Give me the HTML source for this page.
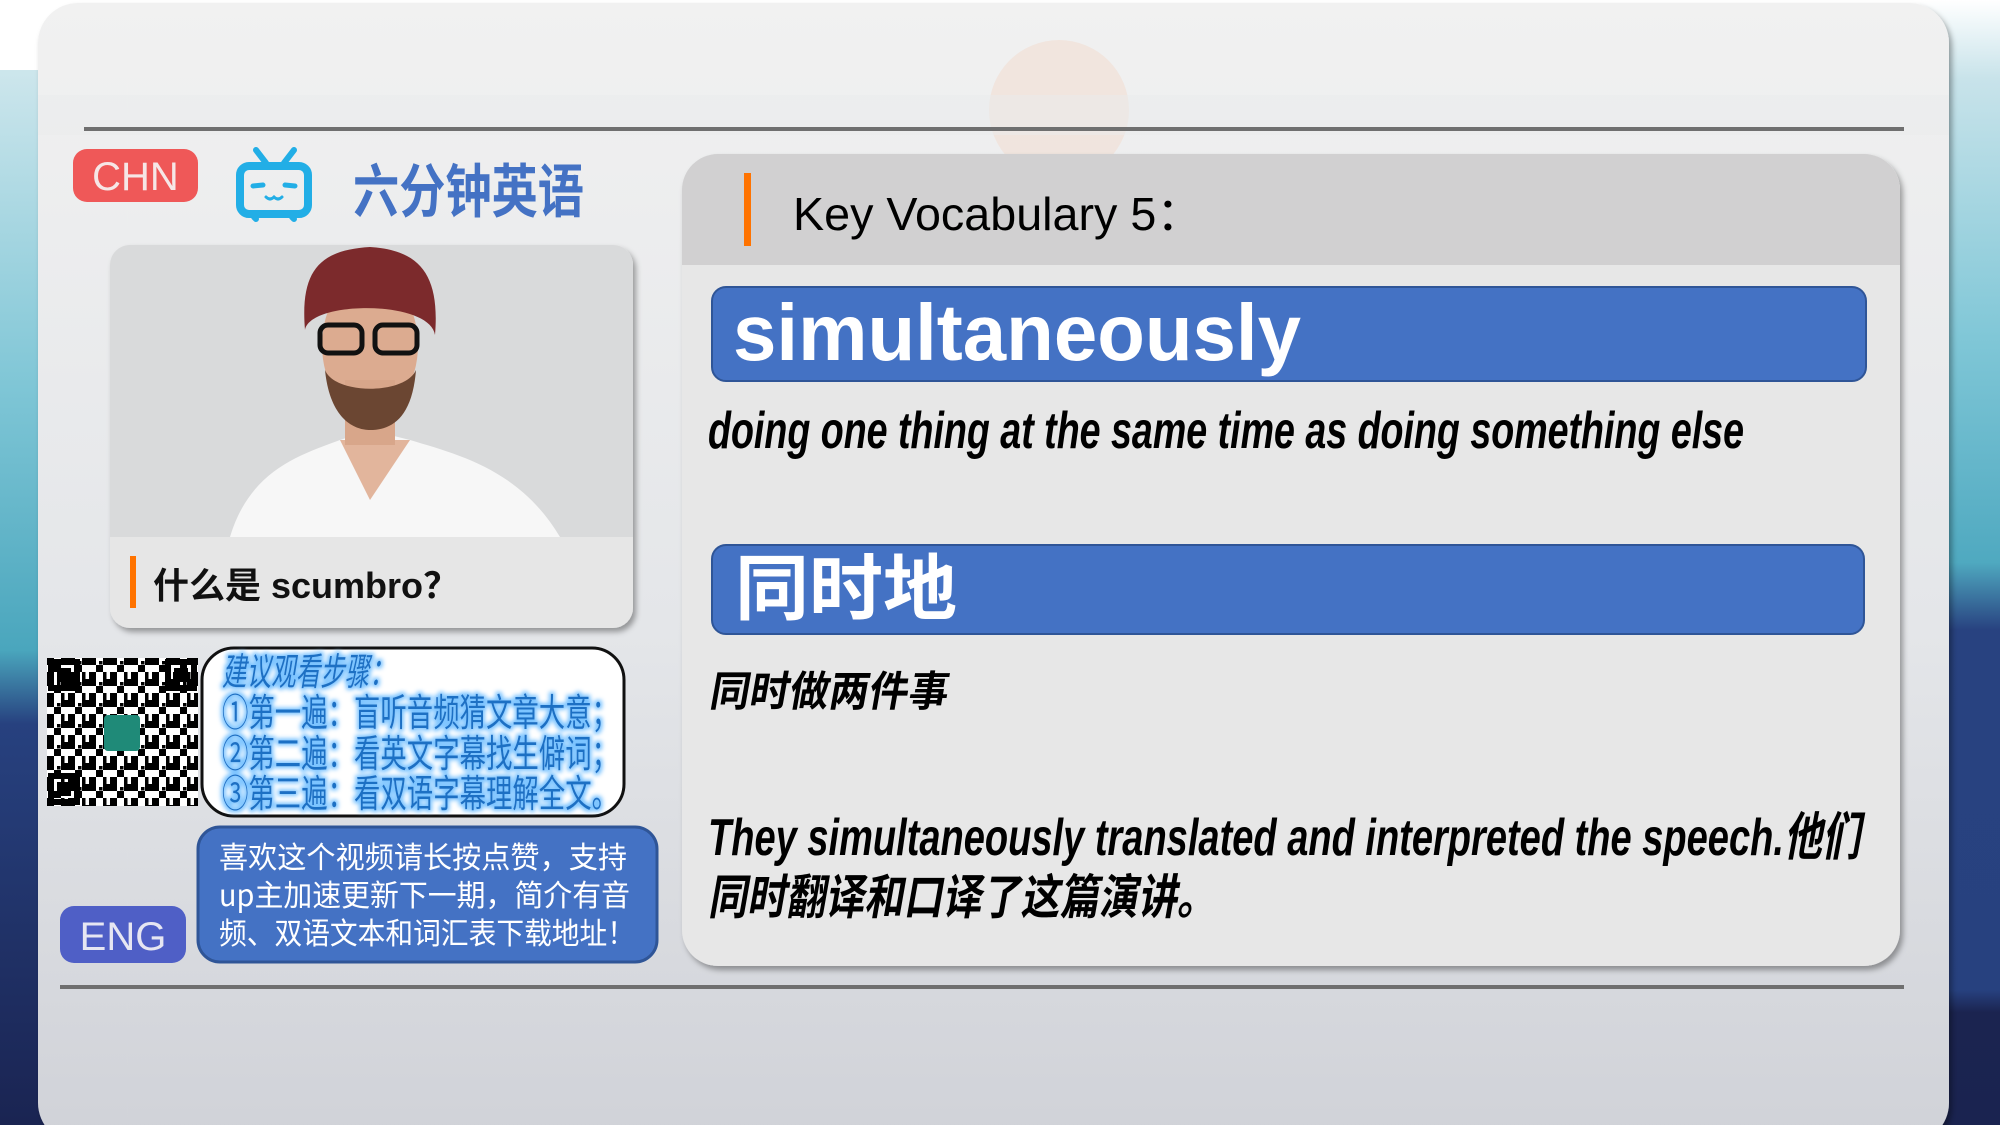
<!DOCTYPE html>
<html><head><meta charset="utf-8">
<style>
html,body{margin:0;padding:0;width:2000px;height:1125px;overflow:hidden;background:#fff}
svg{display:block}
text{font-family:"Liberation Sans","Noto Sans CJK SC",sans-serif}
.cjk{font-family:"Noto Sans CJK SC","WenQuanYi Zen Hei",sans-serif}
</style></head><body>
<svg width="2000" height="1125" viewBox="0 0 2000 1125" xmlns="http://www.w3.org/2000/svg">
<defs>
<linearGradient id="card" x1="0" y1="0" x2="0" y2="1">
<stop offset="0" stop-color="#f1f1f1"/><stop offset="0.55" stop-color="#e4e6e9"/><stop offset="1" stop-color="#d0d2d8"/>
</linearGradient>
<linearGradient id="leftbg" x1="0" y1="0" x2="0" y2="1">
<stop offset="0" stop-color="#cde6ec"/><stop offset="0.3" stop-color="#7fc6d6"/><stop offset="0.55" stop-color="#4aa6bd"/><stop offset="0.62" stop-color="#27417f"/><stop offset="1" stop-color="#1a2452"/>
</linearGradient>
<linearGradient id="rightbg" x1="0" y1="0" x2="0" y2="1">
<stop offset="0" stop-color="#fff"/><stop offset="0.07" stop-color="#c8e3ea"/><stop offset="0.3" stop-color="#80c7d7"/><stop offset="0.5" stop-color="#4fa9c0"/><stop offset="0.56" stop-color="#284280"/><stop offset="0.88" stop-color="#27417f"/><stop offset="0.9" stop-color="#1b2450"/><stop offset="1" stop-color="#1a2350"/>
</linearGradient>
<filter id="sh" x="-5%" y="-5%" width="110%" height="115%"><feDropShadow dx="3" dy="4" stdDeviation="3" flood-color="#000" flood-opacity="0.35"/></filter>
<filter id="glow" x="-5%" y="-20%" width="110%" height="140%"><feMorphology operator="dilate" radius="2" in="SourceAlpha" result="d"/><feGaussianBlur in="d" stdDeviation="2" result="b"/><feFlood flood-color="#7cc4ff"/><feComposite in2="b" operator="in" result="g"/><feMerge><feMergeNode in="g"/><feMergeNode in="SourceGraphic"/></feMerge></filter>
<pattern id="qr" x="47" y="658" width="21" height="21" patternUnits="userSpaceOnUse">
<rect width="21" height="21" fill="#fff"/>
<rect x="0" y="0" width="7" height="7" fill="#000"/><rect x="14" y="0" width="7" height="7" fill="#000"/>
<rect x="7" y="7" width="7" height="7" fill="#000"/><rect x="0" y="14" width="7" height="7" fill="#000"/>
<rect x="14" y="14" width="3.5" height="7" fill="#000"/><rect x="10" y="3" width="3.5" height="3.5" fill="#000"/>
</pattern>
</defs>
<rect width="2000" height="1125" fill="#fff"/>
<rect x="0" y="70" width="60" height="1055" fill="url(#leftbg)"/>
<rect x="1920" y="0" width="80" height="1125" fill="url(#rightbg)"/>
<rect x="38" y="3" width="1911" height="1140" rx="40" fill="url(#card)" filter="url(#sh)"/>
<circle cx="1059" cy="110" r="70" fill="#f2ddd2" opacity="0.6"/>
<rect x="38" y="95" width="1911" height="40" fill="#e9ebec" opacity="0.5"/>
<rect x="84" y="127" width="1820" height="4" fill="#6f6f6f"/>
<rect x="60" y="985" width="1844" height="4" fill="#6f6f6f"/>
<rect x="73" y="149" width="125" height="53" rx="14" fill="#ef5858"/>
<text x="135.5" y="190" font-size="40" fill="#f6e6e6" text-anchor="middle">CHN</text>
<g stroke="#22aee6" fill="none" stroke-linecap="round">
<rect x="240" y="166" width="68" height="48" rx="9" stroke-width="8"/>
<line x1="256" y1="150" x2="266" y2="163" stroke-width="6"/>
<line x1="294" y1="150" x2="284" y2="163" stroke-width="6"/>
<line x1="253" y1="186" x2="263" y2="185" stroke-width="5"/>
<line x1="285" y1="185" x2="295" y2="186" stroke-width="5"/>
<path d="M266 197 q4 4 8 0 q4 4 8 0" stroke-width="3"/>
<line x1="254" y1="217" x2="256" y2="219" stroke-width="6"/>
<line x1="292" y1="217" x2="294" y2="219" stroke-width="6"/>
</g>
<text class="cjk" x="353" y="212" font-size="58" font-weight="700" fill="#4472c4" textLength="231" lengthAdjust="spacingAndGlyphs">六分钟英语</text>
<g filter="url(#sh)">
<rect x="110" y="245" width="523" height="383" rx="20" fill="#e6e6e6"/>
</g>
<path d="M110 537 V265 a20 20 0 0 1 20 -20 H613 a20 20 0 0 1 20 20 V537 Z" fill="#d9dadb"/>
<path d="M230 537 C250 470 300 455 340 440 L370 430 L410 440 C460 455 520 470 560 537 Z" fill="#f7f7f7"/>
<path d="M340 440 L370 500 L410 440 Z" fill="#e2b59c"/>
<ellipse cx="370" cy="345" rx="48" ry="70" fill="#dcab90"/>
<rect x="345" y="380" width="50" height="65" fill="#d8a68a"/>
<path d="M325 370 C330 420 355 430 370 430 C390 430 412 420 416 370 C405 395 335 395 325 370Z" fill="#6b4632"/>
<path d="M305 330 C300 270 320 250 370 247 C420 250 440 275 435 335 C430 300 310 300 305 330Z" fill="#7c2a2c"/>
<rect x="320" y="325" width="42" height="28" rx="8" fill="none" stroke="#111" stroke-width="5"/>
<rect x="375" y="325" width="42" height="28" rx="8" fill="none" stroke="#111" stroke-width="5"/>
<rect x="130" y="556" width="6" height="52" fill="#ff7300"/>
<text x="153" y="598" font-size="36" font-weight="700" fill="#111"><tspan class="cjk">什么是</tspan> scumbro<tspan class="cjk">？</tspan></text>
<rect x="47" y="658" width="151" height="148" fill="url(#qr)"/>
<g fill="none" stroke="#000" stroke-width="6">
<rect x="51" y="662" width="26" height="26"/><rect x="168" y="662" width="26" height="26"/><rect x="51" y="776" width="26" height="26"/>
</g>
<rect x="57" y="668" width="14" height="14" fill="#000"/><rect x="174" y="668" width="14" height="14" fill="#000"/><rect x="57" y="782" width="14" height="14" fill="#000"/>
<rect x="104" y="715" width="36" height="36" rx="4" fill="#1f8a78"/>
<rect x="202" y="648" width="422" height="168" rx="32" fill="#fff" stroke="#111" stroke-width="3"/>
<g class="cjk" font-size="38" fill="#1d6fc4" filter="url(#glow)">
<text class="cjk" x="222" y="685" textLength="172" lengthAdjust="spacingAndGlyphs" font-style="italic">建议观看步骤：</text>
<text class="cjk" x="222" y="726" textLength="396" lengthAdjust="spacingAndGlyphs">①第一遍：盲听音频猜文章大意；</text>
<text class="cjk" x="222" y="767" textLength="396" lengthAdjust="spacingAndGlyphs">②第二遍：看英文字幕找生僻词；</text>
<text class="cjk" x="222" y="807" textLength="396" lengthAdjust="spacingAndGlyphs">③第三遍：看双语字幕理解全文。</text>
</g>
<rect x="198" y="827" width="459" height="135" rx="22" fill="#4472c4" stroke="#2f5597" stroke-width="3"/>
<g font-size="30" fill="#fff" class="cjk">
<text class="cjk" x="219" y="868" textLength="408" lengthAdjust="spacingAndGlyphs">喜欢这个视频请长按点赞，支持</text>
<text class="cjk" x="219" y="906" textLength="411" lengthAdjust="spacingAndGlyphs">up主加速更新下一期，简介有音</text>
<text class="cjk" x="219" y="944" textLength="416" lengthAdjust="spacingAndGlyphs">频、双语文本和词汇表下载地址！</text>
</g>
<rect x="60" y="906" width="126" height="57" rx="14" fill="#4f5fc6"/>
<text x="123" y="950" font-size="40" fill="#e6e6f2" text-anchor="middle">ENG</text>
<g filter="url(#sh)">
<rect x="682" y="154" width="1218" height="812" rx="36" fill="#e7e7e7"/>
</g>
<path d="M682 265 V190 a36 36 0 0 1 36 -36 H1864 a36 36 0 0 1 36 36 V265 Z" fill="#d1d0d1"/>
<rect x="744" y="173" width="7" height="73" fill="#ff7300"/>
<text x="793" y="230" font-size="46" fill="#000" textLength="410" lengthAdjust="spacingAndGlyphs">Key Vocabulary 5<tspan class="cjk">：</tspan></text>
<rect x="712" y="287" width="1154" height="94" rx="14" fill="#4472c4" stroke="#2f5597" stroke-width="2"/>
<text x="733" y="360" font-size="80" font-weight="700" fill="#fff" textLength="568" lengthAdjust="spacingAndGlyphs">simultaneously</text>
<text x="708" y="448" font-size="52" font-weight="700" font-style="italic" fill="#000" textLength="1036" lengthAdjust="spacingAndGlyphs">doing one thing at the same time as doing something else</text>
<rect x="712" y="545" width="1152" height="89" rx="14" fill="#4472c4" stroke="#2f5597" stroke-width="2"/>
<text class="cjk" x="735" y="614" font-size="72" font-weight="700" fill="#fff" textLength="222" lengthAdjust="spacingAndGlyphs">同时地</text>
<text class="cjk" x="708" y="706" font-size="42" font-weight="700" fill="#000" textLength="238" lengthAdjust="spacingAndGlyphs" transform="skewX(-10) translate(125 0)">同时做两件事</text>
<text x="708" y="855" font-size="52" font-weight="700" font-style="italic" fill="#000" textLength="1152" lengthAdjust="spacingAndGlyphs">They simultaneously translated and interpreted the speech.<tspan class="cjk">他们</tspan></text>
<text class="cjk" x="708" y="914" font-size="48" font-weight="700" fill="#000" textLength="508" lengthAdjust="spacingAndGlyphs" transform="skewX(-10) translate(161 0)">同时翻译和口译了这篇演讲。</text>
</svg>
</body></html>
